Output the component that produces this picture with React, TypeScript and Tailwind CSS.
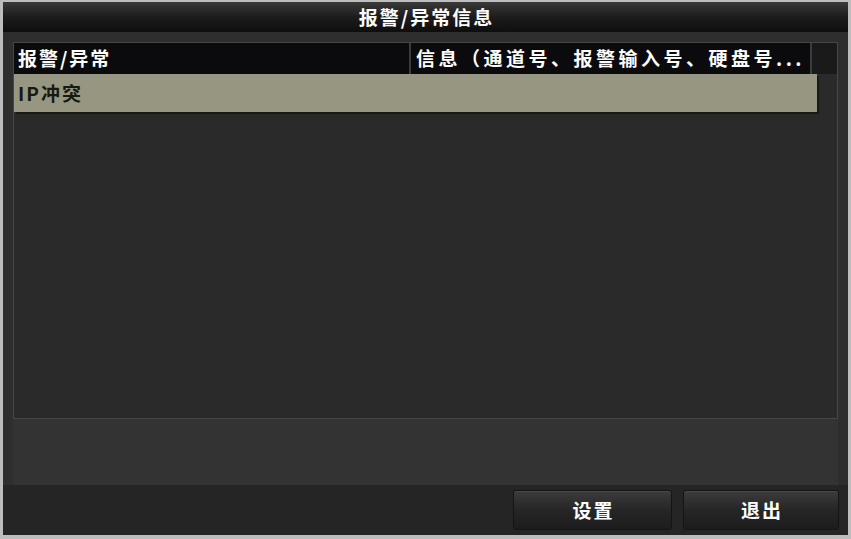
const font = { fontFamily: '"Noto Sans CJK SC", "Liberation Sans", sans-serif' };

function Button({ label }: { label: string }) {
  return (
    <button className="flex h-[40px] w-full items-center justify-center rounded-[3px] border border-[#141414] bg-gradient-to-b from-[#3c3c3c] via-[#262626] to-[#1c1c1c] pl-[2px] text-[19px] font-bold tracking-[2px] text-white shadow-[inset_0_1px_0_#4a4a4a]">
      {label}
    </button>
  );
}

export default function App() {
  return (
    <div style={font} className="flex h-[539px] w-[851px] flex-col border-x-[3px] border-t-[2px] border-b-[4px] border-[#bdbdbd] bg-[#2c2c2c]">
      <div className="flex h-[30px] shrink-0 items-center justify-center bg-gradient-to-b from-[#3a3a3a] via-[#1c1c1c] to-[#0e0e0e] pl-[2px] text-[19px] font-bold tracking-[2px] text-white">
        报警/异常信息
      </div>
      <div className="flex flex-1 flex-col bg-[#2e2e2e] px-[10px] pt-[10px]">
        <div className="flex h-[377px] flex-col border border-[#474747] bg-[#2a2a2a]">
          <div className="flex h-[31px] shrink-0 bg-[#0b0b0d] text-[19px] font-bold tracking-[2px] text-white">
            <div className="flex w-[397px] items-center border-r-2 border-[#3c3c3c] pl-[4px]">报警/异常</div>
            <div className="flex w-[401px] items-center overflow-hidden whitespace-nowrap border-r-2 border-[#3c3c3c] pl-[5px] tracking-[3.5px]">
              信息（通道号、报警输入号、硬盘号...
            </div>
            <div className="flex-1 bg-[#1a1a1a]" />
          </div>
          <div className="flex">
            <div className="flex h-[38px] w-[803px] items-center bg-[#979781] pl-[4px] text-[19px] font-bold tracking-[2px] text-[#161a10] shadow-[2px_2px_0_#1a1a14]">
              IP冲突
            </div>
          </div>
        </div>
        <div className="flex-1 bg-[#333333]" />
      </div>
      <div className="flex h-[50px] shrink-0 items-center justify-end gap-[11px] bg-[#252525] pr-[9px]">
        <div className="w-[159px]"><Button label="设置" /></div>
        <div className="w-[156px]"><Button label="退出" /></div>
      </div>
    </div>
  );
}
